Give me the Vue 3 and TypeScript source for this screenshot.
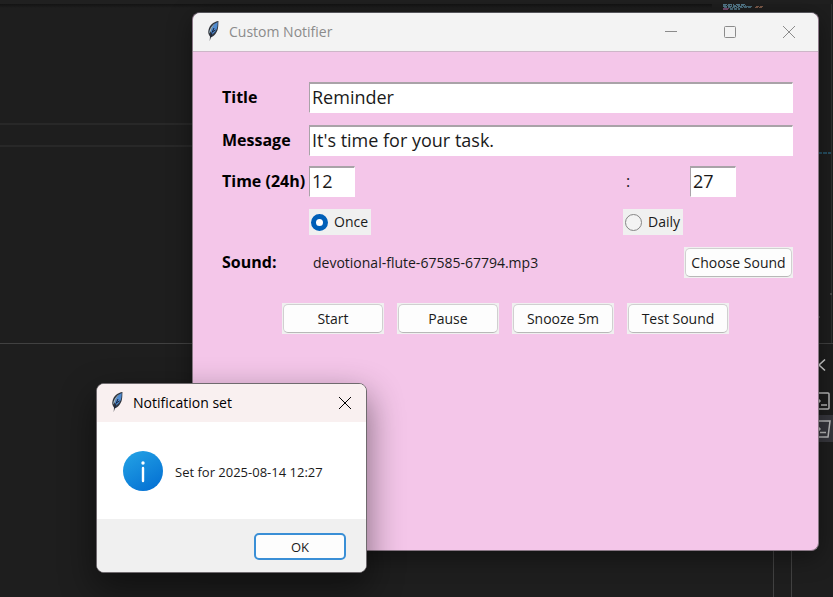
<script setup lang="ts">
import { ref } from 'vue'

const title = ref('Reminder')
const message = ref("It's time for your task.")
const hour = ref('12')
const minute = ref('27')
const repeat = ref('once')
const soundFile = 'devotional-flute-67585-67794.mp3'
const actions = ['Start', 'Pause', 'Snooze 5m', 'Test Sound']
</script>

<template>
  <div class="desktop">
    <div class="editor" aria-hidden="true">
      <div class="tab-strip"></div>
      <div class="code-area">
        <div class="code">
          <div class="scroll-shadow"></div>
          <div class="current-line"></div>
        </div>
        <div class="minimap">
          <svg width="120" height="340" viewBox="0 0 120 340" fill="none">
            <g stroke-width="1" opacity="0.85">
              <path d="M11 .5h11M24 .5h10M11 2.500h20" stroke="#5e8ba0" stroke-dasharray="4 1" />
              <path d="M11 1.500h9M21 1.500h13M12 3.500h28" stroke="#51788a" stroke-dasharray="3 1" />
              <path d="M31 2.500h9" stroke="#51788a" />
              <path d="M44 2.500h8M43 3.500h8" stroke="#8d6450" stroke-dasharray="3 1" />
              <path d="M11 4.500h6M11 5.500h5" stroke="#84547c" />
              <path d="M18 4.500h10M18 5.500h10" stroke="#51788a" stroke-dasharray="3 1" />
            </g>
            <path d="M106 149h13" stroke="#2f7fa3" stroke-width="1" stroke-dasharray="4 1" />
            <path d="M119.500 0v340" stroke="#303030" />
            <path d="M106 313h2M118 290h2" stroke="#666" />
          </svg>
        </div>
      </div>
      <div class="panel">
        <div class="terminal"></div>
        <div class="gutter"></div>
        <div class="sessions">
          <svg class="session" viewBox="0 0 42 26" width="42" height="26" fill="none" stroke="#d0d0d0" stroke-width="1.600">
            <path d="M33 3.500l-6 5.500 6 5.500" />
          </svg>
          <svg class="session" viewBox="0 0 42 26" width="42" height="26" fill="none" stroke="#b9b9b9" stroke-width="1.500">
            <rect x="22" y="4" width="15" height="16" rx="1" />
            <path d="M25 9l3 3-3 3M29 16h6" />
          </svg>
          <svg class="session selected" viewBox="0 0 42 27" width="42" height="27" fill="none" stroke="#b9b9b9" stroke-width="1.500">
            <path d="M22 6h16l-2 16H20z" />
            <path d="M25 11l3 3-3 3M28 17.500h6" />
          </svg>
        </div>
      </div>
    </div>

    <main class="window notifier">
      <header class="titlebar">
        <svg class="feather" viewBox="0 0 14 22" width="14" height="22" aria-hidden="true">
          <path d="M12.500 1C8 1.500 3.500 5 2.500 10c-.8 3 .3 5 1.500 6.500L3.700 21l1.200-3.500C8.500 16 11.500 12 12 8c.5-3 .2-5 .5-7z" fill="#30353d" />
          <path d="M11.700 2C8 3.500 5.300 7.500 5 11.500L5.500 15C8.700 13 10.800 10 11.300 7c.4-2 .3-3.500.4-5z" fill="#4f8bd0" />
          <path d="M9 3.300C5.500 6 3 10 3.300 13.500L5 11c.4-2.500 2-5 4-7.700z" fill="#a3b8c2" />
          <path d="M8 8C6.500 11 5.500 14 4.500 17M9.500 10L7 11.500" fill="none" stroke="#17233c" stroke-width="1" />
        </svg>
        <h1 class="caption">Custom Notifier</h1>
        <div class="controls">
          <button type="button" aria-label="Minimize">
            <svg viewBox="0 0 14 14" width="14" height="14"><path d="M1 6.500h12" /></svg>
          </button>
          <button type="button" aria-label="Maximize">
            <svg viewBox="0 0 14 14" width="14" height="14"><rect x="1.500" y="1.500" width="11" height="11" rx="1" /></svg>
          </button>
          <button type="button" aria-label="Close">
            <svg viewBox="0 0 14 14" width="14" height="14"><path d="M1 1l12 12M13 1L1 13" /></svg>
          </button>
        </div>
      </header>

      <form class="form" @submit.prevent>
        <div class="row">
          <label class="name" for="title">Title</label>
          <input id="title" v-model="title" class="entry wide" type="text" />
        </div>
        <div class="row">
          <label class="name" for="message">Message</label>
          <input id="message" v-model="message" class="entry wide" type="text" />
        </div>
        <div class="row time">
          <label class="name" for="hour">Time (24h)</label>
          <input id="hour" v-model="hour" class="entry short" type="text" />
          <span class="colon">:</span>
          <input id="minute" v-model="minute" class="entry short minute" type="text" aria-label="Minute" />
        </div>
        <div class="row repeat">
          <label class="choice once"><input v-model="repeat" type="radio" name="repeat" value="once" /><span>Once</span></label>
          <label class="choice"><input v-model="repeat" type="radio" name="repeat" value="daily" /><span>Daily</span></label>
        </div>
        <div class="row sound">
          <span class="name">Sound:</span>
          <span class="file">{{ soundFile }}</span>
          <span class="pad choose"><button class="push" type="button">Choose Sound</button></span>
        </div>
        <div class="actions">
          <span v-for="action in actions" :key="action" class="pad">
            <button class="push" type="button">{{ action }}</button>
          </span>
        </div>
      </form>
    </main>

    <section class="window dialog" role="dialog" aria-labelledby="dialog-title">
      <header class="titlebar">
        <svg class="feather" viewBox="0 0 14 22" width="14" height="22" aria-hidden="true">
          <path d="M12.500 1C8 1.500 3.500 5 2.500 10c-.8 3 .3 5 1.500 6.500L3.700 21l1.200-3.500C8.500 16 11.500 12 12 8c.5-3 .2-5 .5-7z" fill="#30353d" />
          <path d="M11.700 2C8 3.500 5.300 7.500 5 11.500L5.500 15C8.700 13 10.800 10 11.300 7c.4-2 .3-3.500.4-5z" fill="#4f8bd0" />
          <path d="M9 3.300C5.500 6 3 10 3.300 13.500L5 11c.4-2.500 2-5 4-7.700z" fill="#a3b8c2" />
          <path d="M8 8C6.500 11 5.500 14 4.500 17M9.500 10L7 11.500" fill="none" stroke="#17233c" stroke-width="1" />
        </svg>
        <h2 id="dialog-title" class="caption">Notification set</h2>
        <div class="controls">
          <button type="button" aria-label="Close">
            <svg viewBox="0 0 14 14" width="14" height="14"><path d="M1 1l12 12M13 1L1 13" /></svg>
          </button>
        </div>
      </header>
      <div class="notice">
        <svg viewBox="0 0 40 40" width="40" height="40" aria-hidden="true">
          <defs>
            <linearGradient id="info" x1="0.200" y1="0" x2="0.800" y2="1">
              <stop offset="0" stop-color="#22a0e4" />
              <stop offset="1" stop-color="#0470d3" />
            </linearGradient>
          </defs>
          <circle cx="20" cy="20" r="20" fill="url(#info)" />
          <circle cx="20" cy="12" r="1.700" fill="#fff" />
          <path d="M20 17v13" stroke="#fff" stroke-width="2.400" stroke-linecap="round" />
        </svg>
        <p>Set for 2025-08-14 12:27</p>
      </div>
      <footer class="footer">
        <button class="ok" type="button">OK</button>
      </footer>
    </section>
  </div>
</template>

<style>
body {
  margin: 0;
  background: #1e1e1e;
}
</style>

<style scoped>
.desktop {
  position: relative;
  min-height: 100vh;
  overflow: hidden;
  font-family: "Open Sans", "Noto Sans", sans-serif;
  font-size: 14px;
  color: #1a1a1a;
}
.desktop *,
.desktop {
  box-sizing: border-box;
}
.editor {
  display: flex;
  flex-direction: column;
  min-height: 100vh;
  background: #1e1e1e;
}
.tab-strip {
  height: 4px;
  background: #202020;
}
.code-area {
  display: flex;
  height: 340px;
  border-bottom: 1px solid #414141;
}
.code {
  flex: 1;
}
.scroll-shadow {
  height: 4px;
  background: linear-gradient(#131313, #1e1e1e);
}
.current-line {
  height: 24px;
  margin-top: 115px;
  border: solid #282828;
  border-width: 2px 0;
}
.minimap {
  width: 121px;
  overflow: hidden;
}
.panel {
  display: flex;
  flex: 1;
}
.terminal {
  flex: 1;
}
.gutter {
  width: 19px;
  border: solid #414141;
  border-width: 0 1px;
}
.sessions {
  width: 41px;
  padding-top: 12px;
  display: flex;
  flex-direction: column;
}
.session {
  display: block;
}
.session:first-child {
  margin-bottom: 7px;
}
.selected {
  background: #37373d;
}
.window {
  position: absolute;
  display: flex;
  flex-direction: column;
  overflow: hidden;
  border-radius: 8px;
}
.notifier {
  inset: 12px 14px 46px 192px;
  border: 1px solid #8a7886;
  border-top-color: #55555a;
  background: #f4c6e9;
  box-shadow: 0 6px 24px rgba(0, 0, 0, 0.4);
}
.dialog {
  left: 96px;
  top: 383px;
  width: 271px;
  border: 1px solid #6f6a6e;
  background: #fff;
  box-shadow: 0 14px 34px 2px rgba(0, 0, 0, 0.45);
}
.titlebar {
  display: flex;
  align-items: center;
  height: 39px;
  padding-left: 13px;
  background: #f3f3f3;
  border-bottom: 1px solid #cdb6c8;
  color: #8b8b8b;
}
.feather {
  margin-right: 9px;
  margin-bottom: 2px;
}
.caption {
  flex: 1;
  margin: 0;
  font-size: 14px;
  font-weight: 400;
  line-height: 20px;
}
.controls {
  display: flex;
}
.controls button {
  display: flex;
  align-items: center;
  justify-content: center;
  width: 59px;
  height: 38px;
  padding: 0;
  border: 0;
  background: none;
  color: inherit;
}
.controls svg {
  fill: none;
  stroke: currentColor;
  stroke-width: 1;
}
.form {
  padding: 30px 25px 20px 29px;
}
.row {
  display: grid;
  grid-template-columns: 87px 1fr 61px 109px;
  align-items: center;
  margin-bottom: 12px;
}
.name {
  padding-bottom: 2px;
  font-size: 16px;
  font-weight: 700;
  line-height: 20px;
  color: #000;
  white-space: nowrap;
}
.entry {
  min-width: 0;
  height: 31px;
  padding: 0 2px 2px;
  border: 1px solid #fff;
  border-top: 2px solid #a9a3a8;
  border-left: 1px solid #a9a3a8;
  border-radius: 0;
  outline: 0;
  background: #fff;
  color: #1a1a1a;
  font: 18px/24px "Open Sans", "Noto Sans", sans-serif;
}
.wide {
  grid-column: 2 / -1;
}
.short {
  width: 46px;
}
.minute {
  margin-left: 6px;
}
.time {
  margin-top: -2px;
}
.colon {
  padding: 0 0 2px 3px;
  font-size: 16px;
}
.choice {
  display: flex;
  align-items: center;
  justify-self: start;
  gap: 6px;
  height: 26px;
  padding: 0 3px 0 2px;
  background: #f0f0f0;
  white-space: nowrap;
}
.choice span {
  padding-bottom: 1px;
}
.once {
  grid-column: 2;
}
.choice input {
  appearance: none;
  width: 17px;
  height: 17px;
  margin: 0;
  border: 1px solid #858585;
  border-radius: 50%;
  background: #f3f3f3;
}
.choice input:checked {
  border: 5px solid #005fb8;
  background: #fff;
}
.file {
  padding-left: 4px;
}
.choose {
  grid-column: 4;
}
.pad {
  display: flex;
  padding: 1px;
  background: #f0f0f0;
}
.push {
  flex: 1;
  height: 29px;
  padding: 0;
  border: 1px solid #d0d0d0;
  border-bottom-color: #b8b8b8;
  border-radius: 5px;
  background: #fdfdfd;
  color: #1a1a1a;
  font: 14px/20px "Open Sans", "Noto Sans", sans-serif;
  white-space: nowrap;
}
.actions {
  display: flex;
  gap: 13px;
  padding-left: 60px;
  margin-top: 25px;
}
.actions .pad {
  width: 102px;
}
.dialog .titlebar {
  height: 38px;
  background: #f9f0f0;
  border: 0;
  color: #000;
}
.notice {
  display: flex;
  align-items: center;
  gap: 12px;
  height: 97px;
  padding-left: 26px;
}
.notice p {
  margin: 2px 0 0;
  font-size: 13px;
  line-height: 18px;
}
.dialog .controls button {
  width: 42px;
}
.footer {
  display: flex;
  justify-content: flex-end;
  padding: 14px 20px 12px;
  background: #f0f0f0;
}
.ok {
  width: 92px;
  height: 27px;
  padding: 0;
  border: 2px solid #3a8fd6;
  border-radius: 5px;
  background: #fdfdfd;
  color: #1a1a1a;
  font: 13px/18px "Open Sans", "Noto Sans", sans-serif;
}
</style>
